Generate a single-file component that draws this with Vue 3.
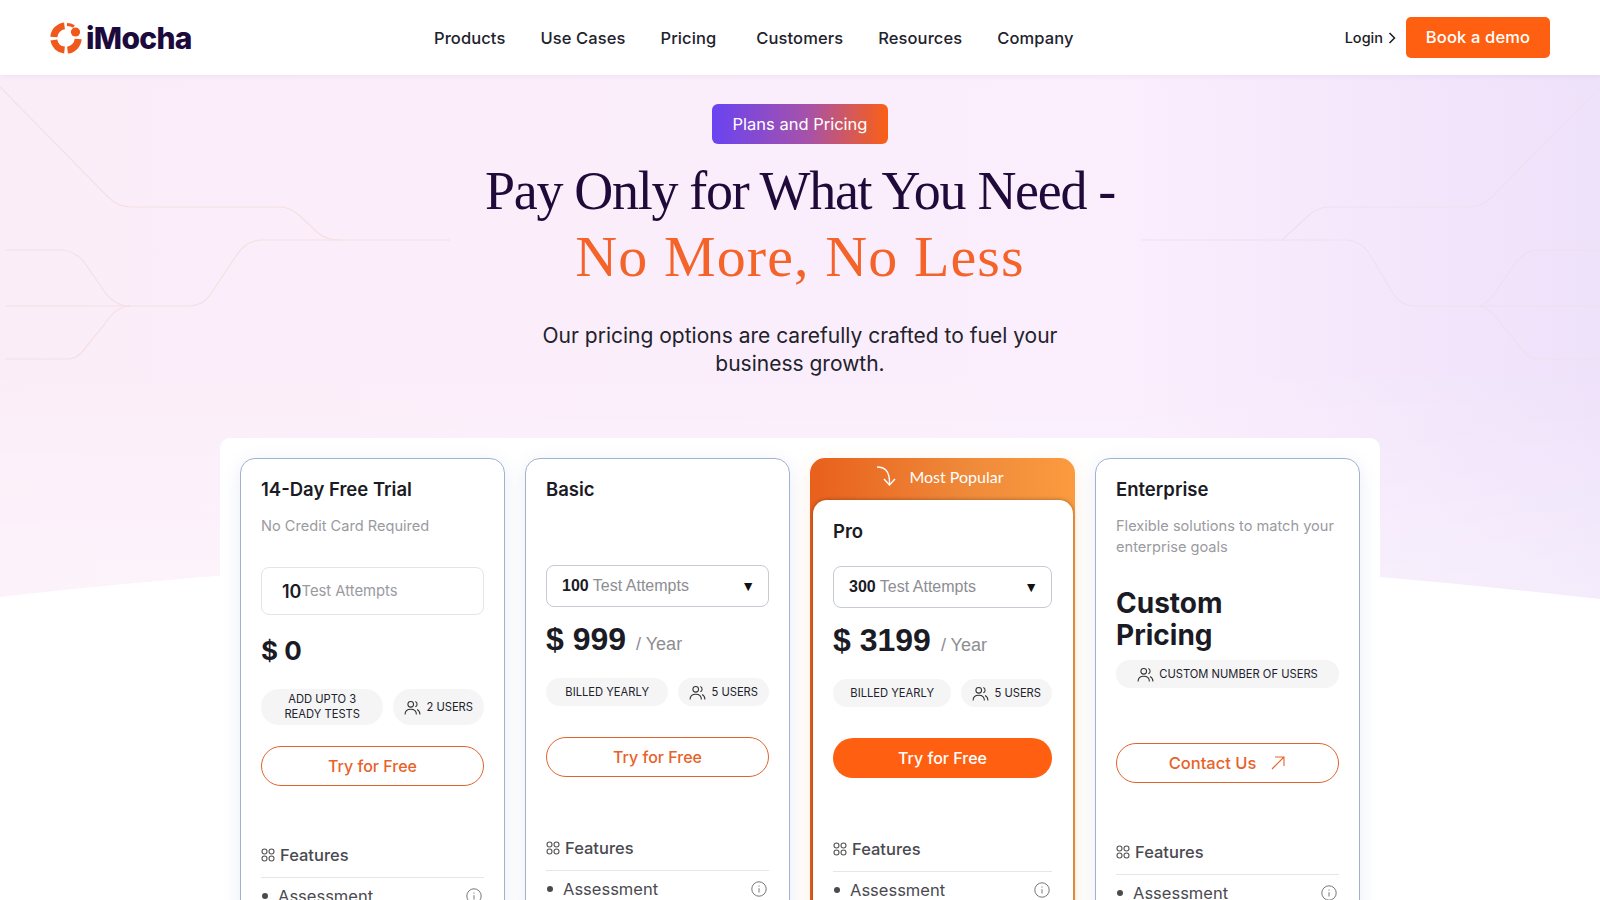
<script setup>
const navItems = ['Products', 'Use Cases', 'Pricing', 'Customers', 'Resources', 'Company']

const plans = [
  { id: 'trial', name: '14-Day Free Trial', sub: 'No Credit Card Required', attempts: '10', price: '$ 0', pill: 'ADD UPTO 3 READY TESTS', users: '2 USERS', cta: 'Try for Free' },
  { id: 'basic', name: 'Basic', attempts: '100', price: '$ 999', pill: 'BILLED YEARLY', users: '5 USERS', cta: 'Try for Free' },
  { id: 'pro', name: 'Pro', attempts: '300', price: '$ 3199', pill: 'BILLED YEARLY', users: '5 USERS', cta: 'Try for Free' },
  { id: 'ent', name: 'Enterprise', sub: 'Flexible solutions to match your enterprise goals', users: 'CUSTOM NUMBER OF USERS', cta: 'Contact Us' }
]
</script>

<template>
  <div class="page">
    <div class="backdrop">
      <svg class="lines" viewBox="0 0 1600 825" width="1600" height="825" fill="none">
        <g transform="translate(0,-75)" stroke-width="1.2">
          <g stroke="#f6dfe2">
            <path d="M0 87 L108 197 Q118 207 132 207 L280 207 Q290 207 300 216 L318 233 Q326 240 340 240" />
            <path d="M450 240 L262 240 Q246 240 236 256 L212 292 Q204 306 188 306 L5 306" />
            <path d="M5 250 L60 250 Q74 250 84 262 L100 285 Q112 306 130 306" />
            <path d="M5 359 L68 359 Q76 359 82 352 L104 325 Q116 306 130 306" />
          </g>
          <g stroke="#f0dfee">
            <path d="M1600 87 L1492 197 Q1482 207 1468 207 L1328 207 Q1318 207 1308 216 L1282 240" />
            <path d="M1142 240 L1345 240 Q1362 240 1372 258 L1392 292 Q1400 306 1416 306 L1600 306" />
            <path d="M1600 250 L1540 250 Q1526 250 1516 262 L1500 285 Q1492 300 1480 306" />
            <path d="M1600 359 L1538 359 Q1530 359 1524 352 L1502 325 Q1492 310 1480 306" />
          </g>
        </g>
      </svg>
      <svg class="wave" viewBox="0 0 1600 345" width="1600" height="345">
        <path d="M0 42 Q800 -48 1600 44 L1600 345 L0 345 Z" fill="#fff" />
      </svg>
    </div>

    <header class="topbar">
      <a class="logo">
        <svg width="32" height="32" viewBox="0 0 32 32" fill="none" stroke="#f0591c" stroke-width="7">
          <path d="M3.8 15 A12.2 12.2 0 0 1 14.5 3.9" />
          <path d="M3.8 18 A12.2 12.2 0 0 0 14.5 28.1" />
          <path d="M17.5 28.1 A12.2 12.2 0 0 0 28.2 17" />
          <path d="M17 2.5 A13.5 13.5 0 0 1 24 4.5" stroke-width="3" />
          <circle cx="25.5" cy="10" r="4.6" fill="#f0591c" stroke="none" />
        </svg>
        <span>iMocha</span>
      </a>
      <nav class="nav">
        <a v-for="item in navItems" :key="item" :class="{ pricing: item === 'Pricing' }">{{ item }}</a>
      </nav>
      <div class="actions">
        <a class="login">Login
          <svg width="8" height="12" viewBox="0 0 8 12" fill="none" stroke="#1b1b25" stroke-width="1.5"><path d="M1.5 1 L6.5 6 L1.5 11" /></svg>
        </a>
        <a class="demo">Book a demo</a>
      </div>
    </header>

    <section class="hero">
      <span class="tag">Plans and Pricing</span>
      <h1>Pay Only for What You Need -<br /><em>No More, No Less</em></h1>
      <p>Our pricing options are carefully crafted to fuel your<br />business growth.</p>
    </section>

    <section class="panel">
      <div v-for="plan in plans" :key="plan.id" class="col" :class="plan.id">
        <div v-if="plan.id === 'pro'" class="ribbon">
          <svg width="24" height="24" viewBox="0 0 24 24" fill="none" stroke="#fff" stroke-width="1.4">
            <path d="M2 3 C9 3 15 6 14.5 20" />
            <path d="M9 15 L14.5 21 L20 15" />
          </svg>
          Most Popular
        </div>
        <div class="card">
          <h3>{{ plan.name }}</h3>
          <p v-if="plan.id === 'trial' || plan.id === 'ent'" class="sub">{{ plan.sub }}</p>

          <div v-if="plan.id === 'trial'" class="fixed"><b>10</b>Test Attempts</div>
          <div v-else-if="plan.id !== 'ent'" class="select">
            <span><b>{{ plan.attempts }}</b> Test Attempts</span>
            <i>▼</i>
          </div>

          <div v-if="plan.id === 'ent'" class="custom">Custom<br />Pricing</div>
          <div v-else class="price">{{ plan.price }}<small v-if="plan.id !== 'trial'">/ Year</small></div>

          <div class="pills">
            <span v-if="plan.pill" class="pill grow">{{ plan.pill }}</span>
            <span class="pill people" :class="{ grow: !plan.pill }">
              <svg width="17" height="17" viewBox="0 0 24 24" fill="none" stroke="#333" stroke-width="1.5">
                <circle cx="9.5" cy="7.5" r="4" />
                <path d="M1.5 22 C1.5 17 5 14.5 9.5 14.5 S17.5 17 17.5 22" />
                <path d="M16 3.6 A4 4 0 0 1 16 11" />
                <path d="M18.5 14.8 C21 16 22.5 18.5 22.5 22" />
              </svg>
              {{ plan.users }}
            </span>
          </div>

          <a class="cta">
            {{ plan.cta }}
            <svg v-if="plan.id === 'ent'" width="16" height="16" viewBox="0 0 16 16" fill="none" stroke="#e8622a" stroke-width="1.1"><path d="M2 14 L14 2 M5 2 H14 V11" /></svg>
          </a>

          <div class="features">
            <svg width="14" height="14" viewBox="0 0 14 14" fill="none" stroke="#555" stroke-width="1.1">
              <circle cx="3.5" cy="3.5" r="2.5" /><circle cx="10.5" cy="3.5" r="2.5" />
              <circle cx="3.5" cy="10.5" r="2.5" /><circle cx="10.5" cy="10.5" r="2.5" />
            </svg>
            Features
          </div>
          <div class="row">
            <span class="dot"></span>
            Assessment
            <svg class="info" width="16" height="16" viewBox="0 0 16 16" fill="none" stroke="#777" stroke-width="1">
              <circle cx="8" cy="8" r="7.2" />
              <path d="M8 7.2 V11.5 M8 4.5 V5.6" />
            </svg>
          </div>
        </div>
      </div>
    </section>
  </div>
</template>

<style scoped>
.page {
  position: relative;
  width: 1600px;
  height: 900px;
  overflow: hidden;
  background: #fff;
  font-family: Inter, "Noto Sans", sans-serif;
  color: #1b1b25;
}
a { color: inherit; text-decoration: none; }

.backdrop {
  position: absolute;
  left: 0;
  top: 75px;
  width: 1600px;
  height: 825px;
  background:
    linear-gradient(180deg, rgba(255, 255, 255, 0) 0, rgba(255, 255, 255, 0) 35%, rgba(255, 255, 255, .35) 62%),
    linear-gradient(90deg, #fbedf8 0%, #fbeefd 70%, #eee1fa 100%);
}
.lines { position: absolute; left: 0; top: 0; }
.wave { position: absolute; left: 0; bottom: 0; }

.topbar {
  position: relative;
  display: flex;
  align-items: center;
  height: 75px;
  padding: 0 50px;
  box-sizing: border-box;
  background: #fff;
  box-shadow: 0 1px 6px rgba(120, 80, 140, .08);
}
.logo {
  display: flex;
  align-items: center;
  gap: 4px;
  width: 140px;
  flex-shrink: 0;
  font-size: 30px;
  font-weight: 800;
  letter-spacing: -.7px;
  color: #1d0a3c;
}
.logo svg { flex-shrink: 0; }
.nav {
  display: flex;
  gap: 35px;
  margin-left: 244px;
  font-size: 16.5px;
  font-weight: 500;
  letter-spacing: .1px;
  color: #22222c;
}
.nav .pricing { margin-right: 5px; }
.actions {
  display: flex;
  align-items: center;
  margin-left: auto;
}
.login {
  display: flex;
  align-items: center;
  gap: 5px;
  font-size: 14.5px;
  font-weight: 500;
}
.demo {
  display: flex;
  align-items: center;
  justify-content: center;
  width: 144px;
  height: 41px;
  margin-left: 10px;
  border-radius: 5px;
  background: #ff5f10;
  color: #fff;
  font-size: 16.5px;
  font-weight: 500;
  letter-spacing: .15px;
  padding-bottom: 2px;
  box-sizing: border-box;
}

.hero {
  position: relative;
  display: flex;
  flex-direction: column;
  align-items: center;
  padding-top: 29px;
  text-align: center;
}
.tag {
  display: flex;
  align-items: center;
  justify-content: center;
  width: 176px;
  height: 40px;
  border-radius: 6px;
  background: linear-gradient(90deg, #6a43f2 0%, #a752a8 55%, #fb5f14 100%);
  color: #fff;
  font-size: 16.5px;
}
.hero h1 {
  margin: 14px 0 0;
  font-family: "Liberation Serif", serif;
  font-size: 54px;
  font-weight: 400;
  letter-spacing: -1.3px;
  line-height: 66px;
  color: #1f0a3a;
}
.hero h1 em {
  font-size: 58px;
  font-style: normal;
  letter-spacing: 1.1px;
  color: #f4642a;
}
.hero p {
  margin: 31px 0 0;
  font-size: 21px;
  line-height: 28px;
  color: #22222c;
}

.panel {
  position: relative;
  display: grid;
  grid-template-columns: repeat(4, 265px);
  gap: 20px;
  align-items: start;
  width: 1160px;
  margin: 60px auto 0;
  padding: 20px;
  box-sizing: border-box;
  border-radius: 10px;
  background: #fff;
}
.col {
  border: 1px solid #9fb2cf;
  border-radius: 15px;
  background: #fff;
  box-shadow: 0 4px 18px rgba(90, 110, 200, .12);
}
.card { padding: 17px 20px 20px; }
.col.pro {
  border: none;
  background: linear-gradient(90deg, #e8601c 0%, #ef8a3a 60%, #fb9b3f 100%);
  padding: 0 2.5px;
  box-shadow: 0 4px 18px rgba(240, 140, 60, .15);
}
.col.pro .card {
  border-radius: 14px 14px 0 0;
  background: #fff;
  padding: 18px 20.5px 20px;
  box-shadow: 0 0 4px rgba(0, 0, 0, .35);
}
.ribbon {
  display: flex;
  align-items: center;
  justify-content: center;
  gap: 10px;
  height: 42px;
  padding: 0 6px 6px 0;
  color: #fff;
  font-family: Lato, sans-serif;
  font-size: 16px;
  box-sizing: border-box;
}
h3 {
  margin: 0;
  font-size: 18.5px;
  font-weight: 600;
  line-height: 27px;
}
.sub {
  margin: 13px 0 0;
  font-size: 14.6px;
  line-height: 21px;
  color: #9a9a9f;
}
.trial .sub { height: 42px; }

.fixed {
  display: flex;
  align-items: center;
  height: 48px;
  margin-top: 9px;
  padding-left: 20px;
  box-sizing: border-box;
  border: 1px solid #e2e4e8;
  border-radius: 8px;
  color: #9a9a9f;
  font-size: 14.8px;
}
.fixed b {
  color: #1b1b25;
  font-size: 18px;
  font-weight: 600;
}
.select {
  display: flex;
  align-items: center;
  justify-content: space-between;
  height: 42px;
  padding: 0 13px 0 15px;
  box-sizing: border-box;
  border: 1px solid #c6cad2;
  border-radius: 8px;
  color: #8d8d92;
  font-family: "Liberation Sans", sans-serif;
  font-size: 16px;
}
.select b { color: #1b1b25; }
.select i { color: #111; font-style: normal; font-size: 14px; }
.basic .select { margin-top: 62px; }
.pro .select { margin-top: 21px; }

.price {
  font-weight: 700;
  color: #1b1b25;
}
.trial .price {
  margin-top: 18px;
  font-size: 26px;
  line-height: 36px;
}
.basic .price, .pro .price {
  margin-top: 12px;
  height: 40px;
  font-family: "Liberation Sans", sans-serif;
  font-size: 32px;
  line-height: 40px;
}
.price small {
  margin-left: 10px;
  font-size: 18px;
  font-weight: 400;
  line-height: 1;
  color: #8d8d92;
}
.custom {
  margin-top: 29px;
  font-size: 28px;
  font-weight: 700;
  line-height: 32px;
}

.pills {
  display: flex;
  gap: 10px;
  margin-top: 19px;
}
.ent .pills { margin-top: 9px; }
.trial .pills { margin-top: 20px; }
.pill {
  display: flex;
  align-items: center;
  justify-content: center;
  gap: 5px;
  height: 28px;
  padding: 0 10px;
  box-sizing: border-box;
  border-radius: 18px;
  background: #f5f5f6;
  color: #22222c;
  font-size: 11.2px;
  line-height: 15px;
  text-align: center;
}
.trial .pill { height: 36px; }
.grow { flex: 1; }
.people { flex-shrink: 0; white-space: nowrap; padding: 0 11px; }

.cta {
  display: flex;
  align-items: center;
  justify-content: center;
  gap: 14px;
  height: 40px;
  margin-top: 31px;
  box-sizing: border-box;
  border: 1px solid #e0632e;
  border-radius: 20px;
  color: #e8622a;
  font-size: 16px;
  font-weight: 500;
}
.trial .cta { margin-top: 21px; }
.ent .cta { margin-top: 55px; font-size: 16.5px; }
.pro .cta {
  border: none;
  background: #ff5f10;
  color: #fff;
}
.features {
  display: flex;
  align-items: center;
  gap: 5px;
  height: 24px;
  margin-top: 59px;
  padding-bottom: 10px;
  box-sizing: content-box;
  border-bottom: 1px solid #e6e6e9;
  color: #4a4a50;
  font-size: 16.5px;
  font-weight: 500;
}
.trial .features, .ent .features { margin-top: 57px; }
.row {
  display: flex;
  align-items: center;
  gap: 10px;
  margin-top: 6px;
  padding-left: 1px;
  color: #4a4a50;
  font-size: 16.5px;
  line-height: 24px;
}
.dot {
  width: 6px;
  height: 6px;
  border-radius: 50%;
  background: #4a4a50;
}
.info { margin-left: auto; margin-right: 2px; }
</style>

<style>
html, body { overflow: hidden; }
</style>
